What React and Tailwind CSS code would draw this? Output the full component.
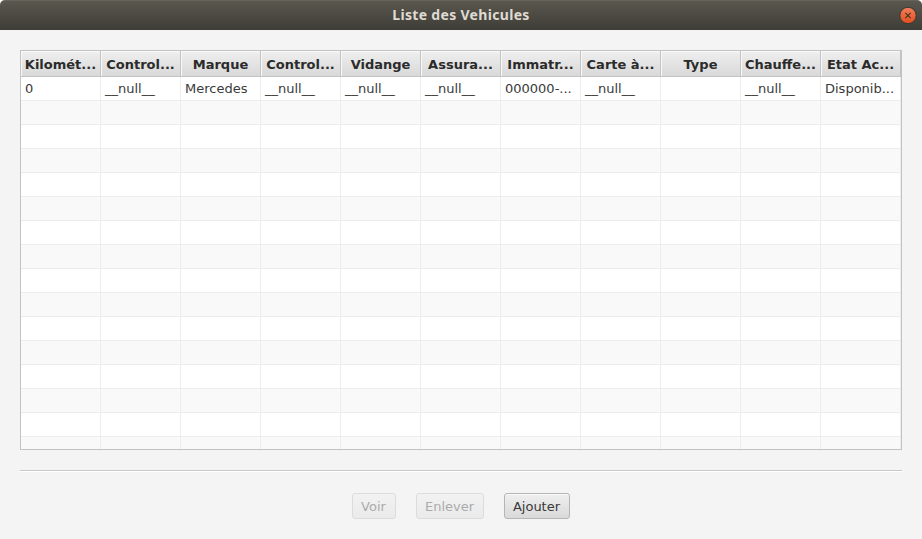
const columns = [
  { title: "Kilomét...", value: "0" },
  { title: "Control...", value: "__null__" },
  { title: "Marque", value: "Mercedes" },
  { title: "Control...", value: "__null__" },
  { title: "Vidange", value: "__null__" },
  { title: "Assura...", value: "__null__" },
  { title: "Immatr...", value: "000000-..." },
  { title: "Carte à...", value: "__null__" },
  { title: "Type", value: "" },
  { title: "Chauffe...", value: "__null__" },
  { title: "Etat Ac...", value: "Disponib..." },
];

function TitleBar() {
  return (
    <header className="grid h-[30px] shrink-0 grid-cols-[1fr_auto_1fr] items-center rounded-t-[5px] border-t border-[#66645b] bg-linear-to-b from-[#5a574e] to-[#3e3d37] pr-[5px]">
      <span />
      <h1 className="pb-[2px] pl-[5px] font-['Noto_Sans',sans-serif] text-[14px] leading-[27px] font-bold tracking-[0.32px] text-[#dfdbd2]">
        Liste des Vehicules
      </h1>
      <button aria-label="Fermer" className="justify-self-end">
        <svg width="18" height="18" viewBox="0 0 18 18" className="block">
          <defs>
            <linearGradient id="close" x1="0" y1="0" x2="0" y2="1">
              <stop offset="0" stopColor="#f37f5c" />
              <stop offset="1" stopColor="#e04e1f" />
            </linearGradient>
          </defs>
          <circle cx="9" cy="8.5" r="8.2" fill="url(#close)" stroke="#38362f" />
          <path d="M6.3 5.8l5.4 5.4M11.7 5.8l-5.4 5.4" stroke="#42301f" strokeWidth="1.1" />
        </svg>
      </button>
    </header>
  );
}

function VehicleTable() {
  return (
    <div className="h-[400px] w-[882px] overflow-hidden border border-[#c3c3c3] bg-white">
      <div className="flex h-[26px] border-b border-[#c3c3c3]">
        {columns.map((c, i) => (
          <div
            key={i}
            className="flex w-[80px] shrink-0 items-center justify-center overflow-hidden border-r border-[#c3c3c3] bg-linear-to-b from-[#efefef] to-[#d9d9d9] text-[13px] font-bold whitespace-nowrap text-[#2b2b2b] shadow-[inset_1px_1px_0_#f8f8f8]"
          >
            <span className="pt-[3px] leading-[20px]">{c.title}</span>
          </div>
        ))}
      </div>
      {Array.from({ length: 16 }, (_, r) => (
        <div key={r} className="flex h-[24px] odd:bg-[#f9f9f9] even:bg-white">
          {columns.map((c, i) => (
            <div
              key={i}
              className="w-[80px] shrink-0 border-r border-b border-[#ededed] pl-[4px] text-[13px] leading-[23px] whitespace-nowrap text-[#3a3a3a]"
            >
              {r === 0 ? c.value : ""}
            </div>
          ))}
        </div>
      ))}
    </div>
  );
}

export default function App() {
  return (
    <div className="h-[539px] w-[922px] bg-white">
      <div className="flex h-full flex-col rounded-t-[5px] bg-[#f4f4f4] font-['DejaVu_Sans',sans-serif]">
        <TitleBar />
        <main className="flex flex-col items-center pt-[20px]">
          <VehicleTable />
          <div className="mt-[20px] h-[2px] w-[882px] border-b border-white bg-[#c8c8c8]" />
          <div className="mt-[21px] flex gap-[20px] text-[13px] leading-[23px]">
            <button disabled className="h-[26px] w-[44px] rounded-[3px] border border-[#dcdcdc] bg-linear-to-b from-[#f2f2f2] to-[#eaeaea] pt-px pr-px text-[#ababab]">
              Voir
            </button>
            <button disabled className="h-[26px] w-[68px] rounded-[3px] border border-[#dcdcdc] bg-linear-to-b from-[#f2f2f2] to-[#eaeaea] pt-px pr-px text-[#ababab]">
              Enlever
            </button>
            <button className="h-[26px] w-[66px] rounded-[3px] border border-[#b5b5b5] bg-linear-to-b from-[#efefef] to-[#d9d9d9] pt-px pr-px text-[#3a3a3a] shadow-[inset_0_1px_0_#f9f9f9]">
              Ajouter
            </button>
          </div>
        </main>
      </div>
    </div>
  );
}
